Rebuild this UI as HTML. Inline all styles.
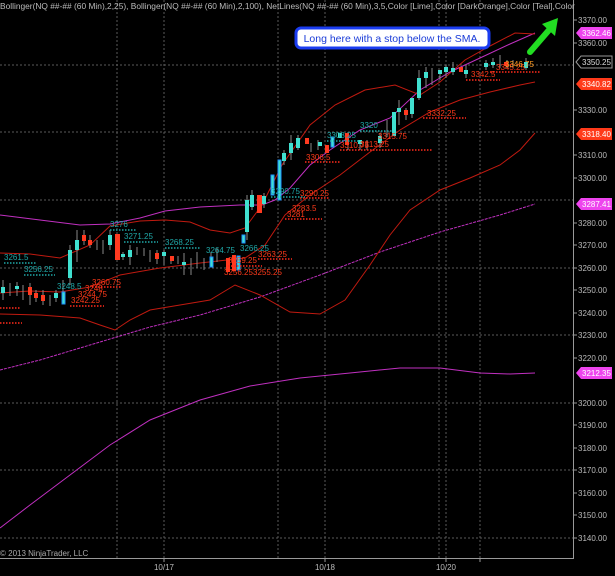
<!DOCTYPE html><html><head><style>
html,body{margin:0;padding:0;background:#000;width:615px;height:576px;overflow:hidden}
svg{display:block;font-family:"Liberation Sans",sans-serif}
</style></head><body>
<svg width="615" height="576" viewBox="0 0 615 576">
<rect width="615" height="576" fill="#000"/>
<g stroke="#5a5a5a" stroke-width="1" stroke-dasharray="2,2">
<line x1="117" y1="0" x2="117" y2="558"/><line x1="164" y1="0" x2="164" y2="558"/>
<line x1="278" y1="0" x2="278" y2="558"/><line x1="325" y1="0" x2="325" y2="558"/>
<line x1="439" y1="0" x2="439" y2="558"/><line x1="446" y1="0" x2="446" y2="558"/>
<line x1="480" y1="0" x2="480" y2="558"/>
<line x1="0" y1="65" x2="573" y2="65"/><line x1="0" y1="132" x2="573" y2="132"/>
<line x1="0" y1="200" x2="573" y2="200"/><line x1="0" y1="268" x2="573" y2="268"/>
<line x1="0" y1="335" x2="573" y2="335"/><line x1="0" y1="403" x2="573" y2="403"/>
<line x1="0" y1="470" x2="573" y2="470"/><line x1="0" y1="538" x2="573" y2="538"/>
</g>
<line x1="573.5" y1="0" x2="573.5" y2="558" stroke="#999"/>
<line x1="0" y1="558.5" x2="574" y2="558.5" stroke="#999"/>
<g stroke="#999"><line x1="164" y1="558" x2="164" y2="562"/><line x1="325" y1="558" x2="325" y2="562"/><line x1="446" y1="558" x2="446" y2="562"/><line x1="480" y1="558" x2="480" y2="562"/></g>
<g font-size="8" fill="#bbb">
<text x="164" y="570" text-anchor="middle">10/17</text><text x="325" y="570" text-anchor="middle">10/18</text><text x="446" y="570" text-anchor="middle">10/20</text>
<text x="0" y="556" fill="#aaa">© 2013 NinjaTrader, LLC</text>
</g>
<g font-size="8" fill="#bbb" stroke="#999">
<line x1="573" y1="20" x2="577" y2="20"/><text x="578" y="23" stroke="none">3370.00</text>
<line x1="573" y1="43" x2="577" y2="43"/><text x="578" y="46" stroke="none">3360.00</text>
<line x1="573" y1="110" x2="577" y2="110"/><text x="578" y="113" stroke="none">3330.00</text>
<line x1="573" y1="155" x2="577" y2="155"/><text x="578" y="158" stroke="none">3310.00</text>
<line x1="573" y1="178" x2="577" y2="178"/><text x="578" y="181" stroke="none">3300.00</text>
<line x1="573" y1="223" x2="577" y2="223"/><text x="578" y="226" stroke="none">3280.00</text>
<line x1="573" y1="245" x2="577" y2="245"/><text x="578" y="248" stroke="none">3270.00</text>
<line x1="573" y1="268" x2="577" y2="268"/><text x="578" y="271" stroke="none">3260.00</text>
<line x1="573" y1="290" x2="577" y2="290"/><text x="578" y="293" stroke="none">3250.00</text>
<line x1="573" y1="313" x2="577" y2="313"/><text x="578" y="316" stroke="none">3240.00</text>
<line x1="573" y1="335" x2="577" y2="335"/><text x="578" y="338" stroke="none">3230.00</text>
<line x1="573" y1="358" x2="577" y2="358"/><text x="578" y="361" stroke="none">3220.00</text>
<line x1="573" y1="403" x2="577" y2="403"/><text x="578" y="406" stroke="none">3200.00</text>
<line x1="573" y1="425" x2="577" y2="425"/><text x="578" y="428" stroke="none">3190.00</text>
<line x1="573" y1="448" x2="577" y2="448"/><text x="578" y="451" stroke="none">3180.00</text>
<line x1="573" y1="470" x2="577" y2="470"/><text x="578" y="473" stroke="none">3170.00</text>
<line x1="573" y1="493" x2="577" y2="493"/><text x="578" y="496" stroke="none">3160.00</text>
<line x1="573" y1="515" x2="577" y2="515"/><text x="578" y="518" stroke="none">3150.00</text>
<line x1="573" y1="538" x2="577" y2="538"/><text x="578" y="541" stroke="none">3140.00</text>
</g>
<!-- highlighted axis labels -->
<g font-size="8">
<path d="M576 33 L581 27 H612 V39 H581 Z" fill="#ee44ee"/><text x="582" y="36" fill="#fff">3362.46</text>
<path d="M576 62 L581 56 H612 V68 H581 Z" fill="#000" stroke="#999"/><text x="582" y="65" fill="#ddd">3350.25</text>
<path d="M576 84 L581 78 H612 V90 H581 Z" fill="#ff3a1a"/><text x="582" y="87" fill="#fff">3340.82</text>
<path d="M576 134 L581 128 H612 V140 H581 Z" fill="#ff3a1a"/><text x="582" y="137" fill="#fff">3318.40</text>
<path d="M576 204 L581 198 H612 V210 H581 Z" fill="#ee44ee"/><text x="582" y="207" fill="#fff">3287.41</text>
<path d="M576 373 L581 367 H612 V379 H581 Z" fill="#ee44ee"/><text x="582" y="376" fill="#fff">3212.35</text>
</g>
<!-- 100 bollinger -->
<g fill="none" stroke="#c030c0" stroke-width="1">
<polyline points="0,215 40,220 80,225 110,224 140,218 165,211 200,207 240,205 262,205 275,200 290,188 310,165 330,150 360,130 390,118 420,90 450,72 480,58 510,44 535,33"/>
<polyline points="0,370 40,360 90,345 150,327 200,315 260,297 320,275 380,252 440,232 500,215 535,204" stroke-dasharray="3,1"/>
<polyline points="0,528 30,505 70,475 110,445 150,420 200,400 250,386 300,378 350,373 400,368 440,368 480,373 510,374 535,373"/>
</g>
<!-- 25 bollinger -->
<g fill="none" stroke="#c01a10" stroke-width="1">
<polyline points="0,253 30,254 60,258 90,245 110,226 140,221 165,220 190,222 210,230 230,233 245,228 262,205 282,165 310,125 335,105 365,90 395,85 420,95 440,82 465,60 490,46 515,33 535,34"/>
<polyline points="0,293 30,291 60,292 90,287 120,275 160,268 200,263 245,258 265,245 285,215 310,195 340,175 370,152 400,130 430,112 460,100 490,92 520,85 535,82"/>
<polyline points="0,314 40,315 80,318 100,325 115,330 130,320 150,310 180,305 210,300 235,285 260,295 290,312 320,314 345,300 370,265 390,235 410,210 440,190 470,178 500,165 520,150 535,133"/>
</g>
<!-- candles -->
<g stroke-width="1">
<g stroke="#888">
<line x1="3" y1="280" x2="3" y2="300"/><line x1="10" y1="283" x2="10" y2="296"/><line x1="17" y1="282" x2="17" y2="296"/><line x1="23" y1="285" x2="23" y2="300"/><line x1="30" y1="283" x2="30" y2="305"/><line x1="36" y1="290" x2="36" y2="302"/><line x1="43" y1="290" x2="43" y2="305"/><line x1="50" y1="295" x2="50" y2="306"/><line x1="56" y1="290" x2="56" y2="302"/><line x1="63" y1="280" x2="63" y2="300"/><line x1="70" y1="245" x2="70" y2="285"/><line x1="77" y1="230" x2="77" y2="262"/><line x1="84" y1="230" x2="84" y2="245"/><line x1="90" y1="235" x2="90" y2="248"/><line x1="97" y1="240" x2="97" y2="250"/><line x1="103" y1="240" x2="103" y2="254"/><line x1="110" y1="230" x2="110" y2="250"/>
<line x1="123" y1="252" x2="123" y2="260"/><line x1="130" y1="245" x2="130" y2="265"/><line x1="137" y1="247" x2="137" y2="255"/><line x1="144" y1="248" x2="144" y2="256"/><line x1="150" y1="250" x2="150" y2="262"/><line x1="157" y1="250" x2="157" y2="264"/><line x1="164" y1="250" x2="164" y2="265"/><line x1="171" y1="258" x2="171" y2="264"/><line x1="178" y1="256" x2="178" y2="264"/><line x1="184" y1="253" x2="184" y2="275"/><line x1="191" y1="258" x2="191" y2="275"/><line x1="197" y1="252" x2="197" y2="268"/><line x1="204" y1="258" x2="204" y2="270"/><line x1="211" y1="252" x2="211" y2="262"/><line x1="217" y1="248" x2="217" y2="262"/>
<line x1="247" y1="195" x2="247" y2="240"/><line x1="252" y1="190" x2="252" y2="210"/><line x1="264" y1="193" x2="264" y2="208"/><line x1="284" y1="150" x2="284" y2="165"/><line x1="291" y1="135" x2="291" y2="160"/><line x1="298" y1="135" x2="298" y2="150"/><line x1="311" y1="143" x2="311" y2="152"/><line x1="318" y1="140" x2="318" y2="150"/><line x1="348" y1="132" x2="348" y2="150"/><line x1="360" y1="140" x2="360" y2="150"/><line x1="367" y1="140" x2="367" y2="150"/><line x1="380" y1="133" x2="380" y2="148"/><line x1="387" y1="120" x2="387" y2="137"/><line x1="399" y1="100" x2="399" y2="125"/><line x1="406" y1="108" x2="406" y2="120"/><line x1="412" y1="98" x2="412" y2="118"/><line x1="419" y1="70" x2="419" y2="100"/><line x1="426" y1="67" x2="426" y2="88"/><line x1="432" y1="68" x2="432" y2="85"/><line x1="440" y1="70" x2="440" y2="80"/><line x1="446" y1="65" x2="446" y2="78"/><line x1="453" y1="62" x2="453" y2="75"/><line x1="466" y1="65" x2="466" y2="78"/><line x1="486" y1="60" x2="486" y2="70"/><line x1="493" y1="58" x2="493" y2="68"/><line x1="500" y1="55" x2="500" y2="68"/><line x1="507" y1="60" x2="507" y2="68"/><line x1="513" y1="60" x2="513" y2="68"/><line x1="526" y1="58" x2="526" y2="70"/>
</g>
<g fill="#40e0d0">
<rect x="1" y="287" width="4" height="6"/><rect x="15" y="286" width="4" height="3"/><rect x="54" y="293" width="4" height="5"/><rect x="68" y="250" width="4" height="28"/><rect x="75" y="240" width="4" height="10"/><rect x="108" y="235" width="4" height="10"/><rect x="121" y="254" width="4" height="3"/><rect x="128" y="250" width="4" height="7"/><rect x="162" y="252" width="4" height="4"/><rect x="182" y="262" width="4" height="3"/><rect x="245" y="200" width="4" height="32"/><rect x="250" y="195" width="4" height="12"/><rect x="262" y="196" width="4" height="8"/><rect x="282" y="153" width="4" height="8"/><rect x="289" y="143" width="4" height="10"/><rect x="296" y="138" width="4" height="10"/><rect x="338" y="133" width="4" height="5"/><rect x="358" y="140" width="4" height="4"/><rect x="378" y="136" width="4" height="7"/><rect x="392" y="112" width="4" height="24"/><rect x="397" y="108" width="4" height="4"/><rect x="410" y="98" width="4" height="16"/><rect x="417" y="78" width="4" height="20"/><rect x="424" y="72" width="4" height="6"/><rect x="438" y="70" width="4" height="4"/><rect x="444" y="67" width="4" height="5"/><rect x="451" y="68" width="4" height="4"/><rect x="464" y="70" width="4" height="4"/><rect x="484" y="63" width="4" height="4"/><rect x="491" y="62" width="4" height="3"/><rect x="524" y="62" width="4" height="6"/><rect x="318" y="142" width="4" height="4"/>
</g>
<g fill="#ff3a20">
<rect x="28" y="287" width="4" height="8"/><rect x="34" y="293" width="4" height="5"/><rect x="41" y="295" width="4" height="6"/><rect x="82" y="235" width="4" height="6"/><rect x="88" y="240" width="4" height="5"/><rect x="115" y="234" width="5" height="26"/><rect x="155" y="253" width="4" height="6"/><rect x="170" y="256" width="4" height="5"/><rect x="257" y="195" width="5" height="18"/><rect x="305" y="138" width="4" height="6"/><rect x="325" y="145" width="4" height="8"/><rect x="345" y="133" width="4" height="12"/><rect x="404" y="110" width="4" height="5"/><rect x="459" y="67" width="4" height="5"/><rect x="504" y="62" width="4" height="4"/><rect x="232" y="255" width="4" height="16"/><rect x="226" y="258" width="4" height="14"/>
</g>
<g fill="#40e0d0" stroke="#1e90ff">
<rect x="62" y="292" width="3" height="12"/><rect x="210" y="257" width="3" height="10"/><rect x="237" y="256" width="3" height="14"/><rect x="242" y="235" width="3" height="8"/><rect x="271" y="175" width="3" height="20"/><rect x="278" y="160" width="3" height="40"/><rect x="331" y="137" width="3" height="10"/>
</g>
</g>
<!-- labels -->
<g font-size="8" fill="#1fa8a8">
<text x="4" y="260">3261.5</text><text x="24" y="272">3256.25</text><text x="57" y="289">3248.5</text><text x="110" y="227">3276</text><text x="124" y="239">3271.25</text><text x="165" y="245">3268.25</text><text x="206" y="253">3264.75</text><text x="240" y="251">3266.25</text><text x="271" y="194">3290.75</text><text x="327" y="138">3308.25</text><text x="360" y="128">3320</text>
</g>
<g font-size="8" fill="#ff3a1a">
<text x="92" y="285">3260.75</text><text x="85" y="291">3248</text><text x="78" y="297">3244.75</text><text x="71" y="303">3242.25</text><text x="228" y="263">3259.25</text><text x="224" y="275">3256.25</text><text x="258" y="257">3263.25</text><text x="253" y="275">3255.25</text><text x="300" y="196">3290.25</text><text x="292" y="211">3283.5</text><text x="287" y="217">3281</text><text x="306" y="160">3306.5</text><text x="378" y="139">3315.75</text><text x="360" y="147">3313.25</text><text x="340" y="148">3310.75</text><text x="427" y="116">3332.25</text><text x="471" y="77">3342.5</text><text x="496" y="70">3345.25</text>
</g>
<text x="505" y="67" font-size="8" fill="#ff9a20">3346.75</text>
<g stroke="#ff2a1a" stroke-width="1.5" stroke-dasharray="1.5,1.5">
<line x1="0" y1="308" x2="20" y2="308"/><line x1="0" y1="323" x2="22" y2="323"/><line x1="92" y1="287" x2="122" y2="287"/><line x1="70" y1="306" x2="104" y2="306"/><line x1="228" y1="266" x2="262" y2="266"/><line x1="258" y1="259" x2="292" y2="259"/><line x1="300" y1="198" x2="330" y2="198"/><line x1="285" y1="219" x2="322" y2="219"/><line x1="305" y1="162" x2="340" y2="162"/><line x1="340" y1="150" x2="433" y2="150"/><line x1="423" y1="118" x2="466" y2="118"/><line x1="466" y1="80" x2="500" y2="80"/><line x1="490" y1="72" x2="540" y2="72"/>
</g>
<g stroke="#1fa8a8" stroke-width="1.5" stroke-dasharray="1.5,1.5">
<line x1="4" y1="263" x2="36" y2="263"/><line x1="24" y1="275" x2="55" y2="275"/><line x1="110" y1="230" x2="136" y2="230"/><line x1="124" y1="242" x2="158" y2="242"/><line x1="165" y1="248" x2="200" y2="248"/><line x1="271" y1="197" x2="305" y2="197"/><line x1="327" y1="141" x2="360" y2="141"/><line x1="360" y1="131" x2="392" y2="131"/>
</g>
<!-- header -->
<text x="0" y="9" font-size="8.4" fill="#bbb">Bollinger(NQ ##-## (60 Min),2,25), Bollinger(NQ ##-## (60 Min),2,100), NetLines(NQ ##-## (60 Min),3,5,Color [Lime],Color [DarkOrange],Color [Teal],Color</text>
<!-- callout -->
<rect x="296" y="28" width="193" height="20" rx="5" fill="#fff" stroke="#1a3cf0" stroke-width="3"/>
<text x="392" y="42" font-size="10.5" fill="#1a3cd8" text-anchor="middle">Long here with a stop below the SMA.</text>
<!-- arrow -->
<line x1="530" y1="52" x2="549" y2="30" stroke="#22dd22" stroke-width="6" stroke-linecap="round"/>
<path d="M542 24 L558 18 L555 36 Z" fill="#22dd22"/>
</svg>
</body></html>
